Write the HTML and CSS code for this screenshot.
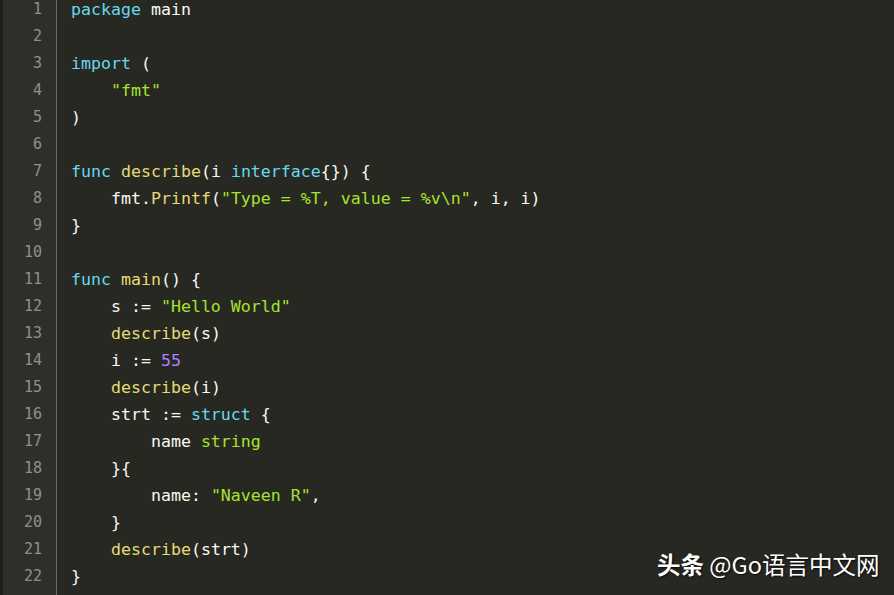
FILE: index.html
```html
<!DOCTYPE html>
<html>
<head>
<meta charset="utf-8">
<link rel="stylesheet" href="styles.css">
</head>
<body>
<div class="editor">
  <div class="gutter">
    <div>1</div><div>2</div><div>3</div><div>4</div><div>5</div><div>6</div><div>7</div><div>8</div><div>9</div><div>10</div><div>11</div><div>12</div><div>13</div><div>14</div><div>15</div><div>16</div><div>17</div><div>18</div><div>19</div><div>20</div><div>21</div><div>22</div>
  </div>
  <div class="code">
<div class="ln"><span class="k">package</span> main</div>
<div class="ln"> </div>
<div class="ln"><span class="k">import</span> (</div>
<div class="ln">    <span class="s">"fmt"</span></div>
<div class="ln">)</div>
<div class="ln"> </div>
<div class="ln"><span class="k">func</span> <span class="f">describe</span>(i <span class="k">interface</span>{}) {</div>
<div class="ln">    fmt.<span class="f">Printf</span>(<span class="s">"Type = %T, value = %v\n"</span>, i, i)</div>
<div class="ln">}</div>
<div class="ln"> </div>
<div class="ln"><span class="k">func</span> <span class="f">main</span>() {</div>
<div class="ln">    s := <span class="s">"Hello World"</span></div>
<div class="ln">    <span class="f">describe</span>(s)</div>
<div class="ln">    i := <span class="n">55</span></div>
<div class="ln">    <span class="f">describe</span>(i)</div>
<div class="ln">    strt := <span class="k">struct</span> {</div>
<div class="ln">        name <span class="s">string</span></div>
<div class="ln">    }{</div>
<div class="ln">        name: <span class="s">"Naveen R"</span>,</div>
<div class="ln">    }</div>
<div class="ln">    <span class="f">describe</span>(strt)</div>
<div class="ln">}</div>
  </div>
  <div class="mark"><b>头条</b> @Go语言中文网</div>
</div>
</body>
</html>
```
FILE: styles.css
```css
html, body {
  margin: 0;
  padding: 0;
  background: #272822;
  width: 894px;
  height: 595px;
  overflow: hidden;
}
.editor {
  position: relative;
  display: flex;
  height: 595px;
  background: #272822;
  border-left: 3px solid #1e1f1b;
  box-sizing: border-box;
}
.gutter {
  width: 54px;
  box-sizing: border-box;
  padding-right: 14px;
  margin-top: -4px;
  background: #2f2f2a;
  border-right: 1px solid #6b6b66;
  text-align: right;
  font-family: "DejaVu Sans Mono", monospace;
  font-size: 15px;
  line-height: 27px;
  color: #8f908a;
}
.gutter div { height: 27px; }
.code {
  padding-left: 14px;
  margin-top: -4px;
  font-family: "DejaVu Sans Mono", monospace;
  font-size: 16.6px;
  line-height: 27px;
  color: #f8f8f2;
}
.ln {
  height: 27px;
  white-space: pre;
}
.k { color: #66d9ef; }
.f { color: #e6db74; }
.s { color: #a6e22e; }
.n { color: #ae81ff; }
.mark {
  position: absolute;
  left: 654px;
  top: 549px;
  font-family: "Noto Sans CJK SC", "Liberation Sans", sans-serif;
  font-size: 23.5px;
  line-height: 30px;
  color: #ffffff;
  text-shadow: 1px 1px 2px rgba(0,0,0,0.8);
  white-space: nowrap;
}
.mark b { font-weight: 700; }
```
